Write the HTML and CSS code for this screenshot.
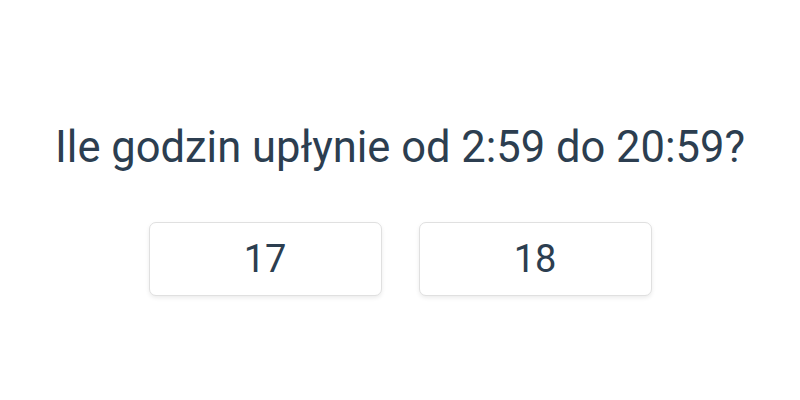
FILE: index.html
```html
<!DOCTYPE html>
<html lang="pl">
<head>
  <meta charset="UTF-8">
  <title>Quiz</title>
  <link rel="stylesheet" href="styles.css">
</head>
<body>
  <div class="quiz">
    <h1 class="question">Ile godzin upłynie od 2:59 do 20:59?</h1>
    <div class="answers">
      <button class="answer">17</button>
      <button class="answer">18</button>
    </div>
  </div>
</body>
</html>
```

FILE: styles.css
```css
body {
  margin: 0;
  font-family: Roboto, "Liberation Sans", sans-serif;
  background: #fff;
  color: #2c3e50;
}
.quiz {
  height: 400px;
  box-sizing: border-box;
  padding-top: 122px;
  display: flex;
  flex-direction: column;
  align-items: center;
}
.question {
  margin: 0 0 48px;
  font-size: 43.5px;
  font-weight: 400;
  line-height: 52px;
}
.answers {
  display: flex;
  gap: 37px;
}
.answer {
  width: 233px;
  height: 74px;
  background: #fff;
  border: 1px solid #e0e0e0;
  border-radius: 7px;
  box-shadow: 0 2px 4px rgba(0, 0, 0, 0.08);
  font-family: inherit;
  font-size: 38px;
  color: #2c3e50;
  cursor: pointer;
}
```
